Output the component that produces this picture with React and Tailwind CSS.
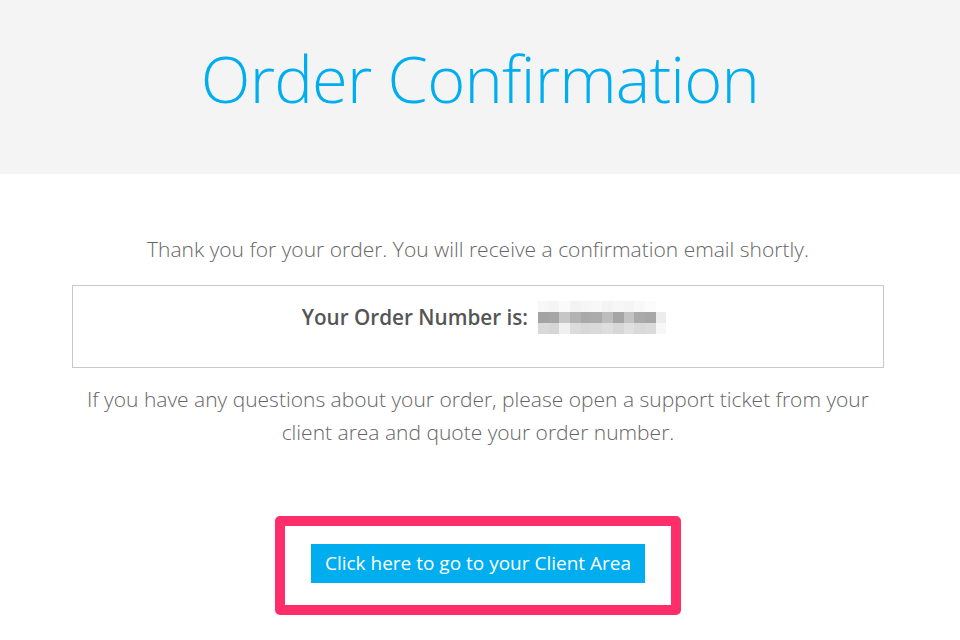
const topRow = ['#f7f7f7', '#f5f5f5', '#fafafa', '#f3f3f3', '#f6f6f6', '#f8f8f8', '#f4f4f4', '#f7f7f7', '#f5f5f5', '#f9f9f9', '#fcfcfc'];
const midRow = ['#a3a3a3', '#a6a6a6', '#c6c6c6', '#b2b2b2', '#a9a9a9', '#ababab', '#bdbdbd', '#a5a5a5', '#c3c3c3', '#aaaaaa', '#a7a7a7', '#ececec'];
const lowRow = ['#d9d9d9', '#d6d6d6', '#f0f0f0', '#dcdcdc', '#d8d8d8', '#dadada', '#dedede', '#d7d7d7', '#e0e0e0', '#d9d9d9', '#dbdbdb', '#f7f7f7'];

function BlurredNumber() {
  const rows = [topRow, midRow, lowRow];
  return (
    <span className="inline-flex flex-col align-middle">
      {rows.map((row, r) => (
        <span key={r} className="flex h-[11px]">
          {row.map((c, i) => (
            <span key={i} className="block h-full w-[10.7px]" style={{ backgroundColor: c }} />
          ))}
        </span>
      ))}
    </span>
  );
}

export default function App() {
  return (
    <main className="min-h-[640px] w-full bg-white font-['Open_Sans',sans-serif]">
      <header className="flex h-[174px] items-start justify-center bg-[#f4f4f4] pt-[33px]">
        <h1 className="text-[65px] font-light leading-[90px] tracking-[-0.8px] text-[#00adef]">Order Confirmation</h1>
      </header>

      <section className="ml-[72px] flex w-[812px] flex-col items-center pt-[58px] text-center">
        <p className="text-[21px] font-light leading-[34px] text-[#666]">
          Thank you for your order. You will receive a confirmation email shortly.
        </p>

        <div className="mt-[19px] flex h-[83px] w-full items-start justify-center border border-[#c8c8c8] pt-[14px] pl-[12px]">
          <p className="flex items-center gap-[10px] text-[20.7px] font-semibold leading-[34px] text-[#555]">
            Your Order Number is:
            <BlurredNumber />
          </p>
        </div>

        <p className="mt-[15px] text-[21px] font-light leading-[33px] text-[#666]">
          If you have any questions about your order, please open a support ticket from your
          <br />
          client area and quote your order number.
        </p>

        <div className="mt-[67px] rounded-[5px] border-[10px] border-[#ff2d6a] px-[26px] pt-[18px] pb-[22px]">
          <button
            type="button"
            className="bg-[#00adef] px-[14px] py-[3px] text-[19px] leading-[33px] text-white"
          >
            Click here to go to your Client Area
          </button>
        </div>
      </section>
    </main>
  );
}
